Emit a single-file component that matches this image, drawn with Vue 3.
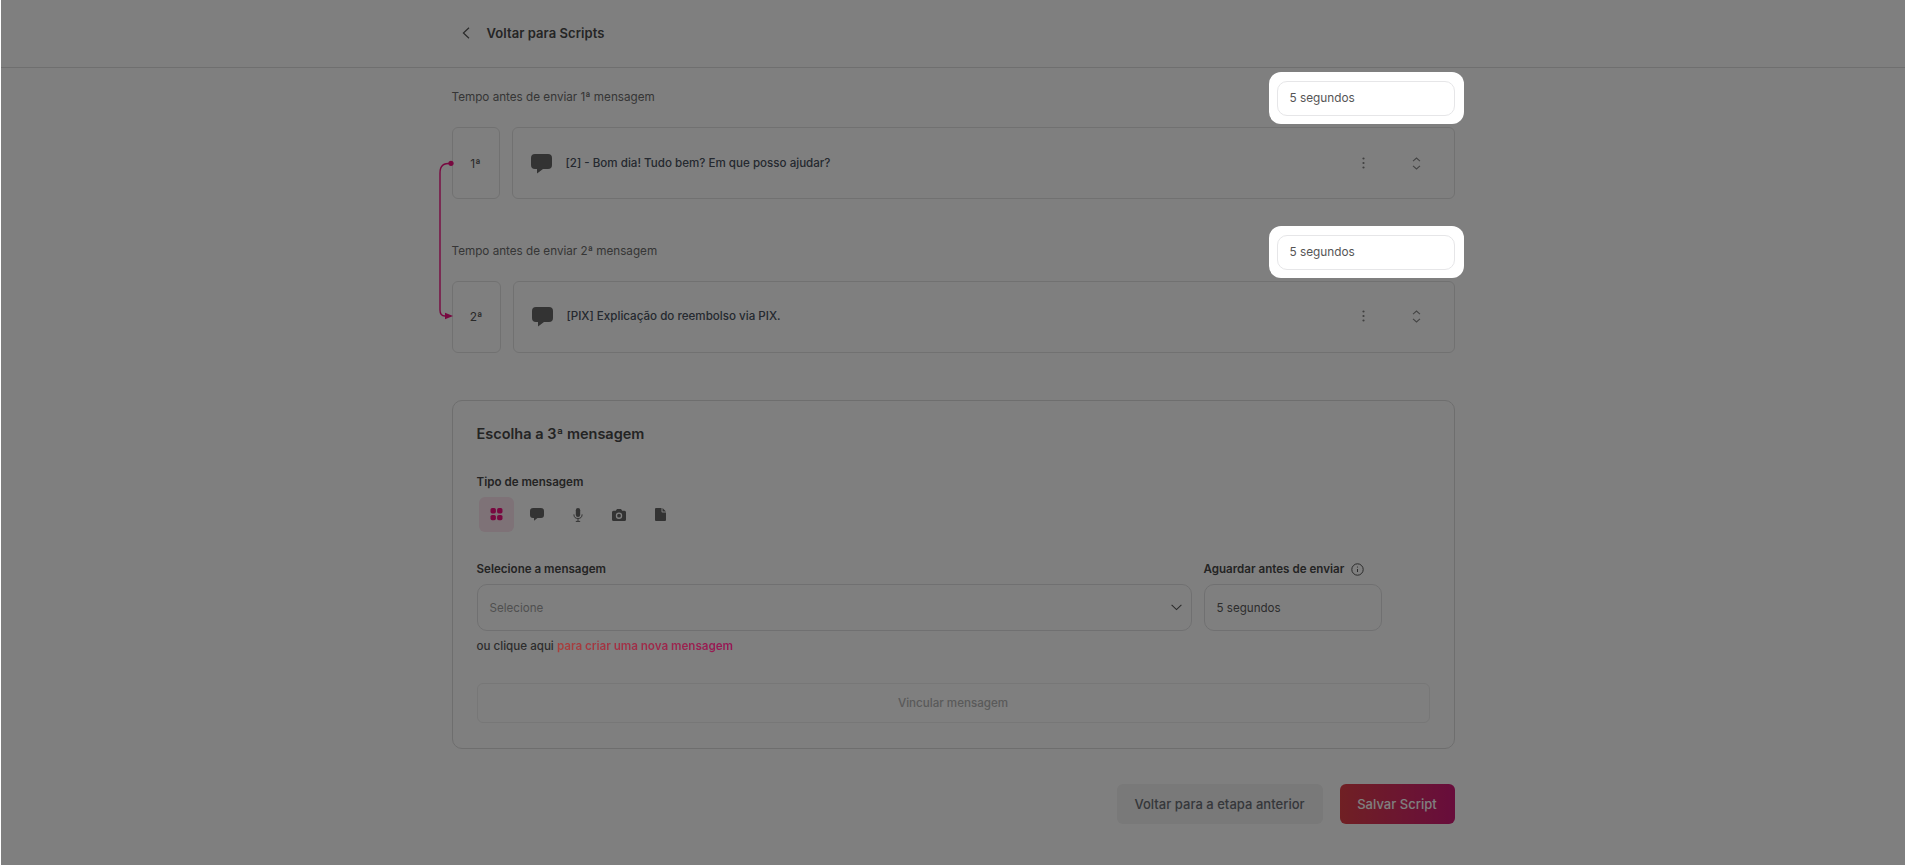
<script setup>
const steps = [
  { id: 1, label: 'Tempo antes de enviar 1ª mensagem', ord: '1ª', text: '[2] - Bom dia! Tudo bem? Em que posso ajudar?', wide: false },
  { id: 2, label: 'Tempo antes de enviar 2ª mensagem', ord: '2ª', text: '[PIX] Explicação do reembolso via PIX.', wide: true }
]
</script>

<template>
  <div class="page">
    <header class="top">
      <div class="top-in">
        <svg class="back" width="8" height="12" viewBox="0 0 8 12" fill="none"><path d="M7 .7 1.4 6 7 11.3" stroke="#555" stroke-width="1.2" /></svg>
        <span class="top-title">Voltar para Scripts</span>
      </div>
    </header>

    <main class="content">
      <svg class="link-line" width="30" height="170" viewBox="0 0 30 170" fill="none">
        <path d="M19 8.3C12 8.3 8 10 8 18V155Q8 161 13 161" stroke="#780840" stroke-width="1.4" />
        <circle cx="19" cy="8.300" r="2.600" fill="#780840" />
        <path d="M13 157.700 21 161 13 164.300Z" fill="#780840" />
      </svg>

      <section v-for="s in steps" :key="s.id" class="step" :class="{ 'step-two': s.wide }">
        <div class="step-head">
          <span class="step-label">{{ s.label }}</span>
          <div class="spot"><div class="spot-input">5 segundos</div></div>
        </div>
        <div class="step-row">
          <div class="ord" :class="{ 'ord-wide': s.wide }">{{ s.ord }}</div>
          <div class="msg">
            <svg class="bubble" width="21" height="20" viewBox="0 0 21 20"><path d="M4 0h13a4 4 0 0 1 4 4v7a4 4 0 0 1-4 4h-5l-6 4.500V15H4a4 4 0 0 1-4-4V4a4 4 0 0 1 4-4z" fill="#666" /></svg>
            <span class="msg-text">{{ s.text }}</span>
            <svg class="kebab" width="3" height="12" viewBox="0 0 3 12"><circle cx="1.500" cy="1.500" r="1.100" fill="#808080" /><circle cx="1.500" cy="6" r="1.100" fill="#808080" /><circle cx="1.500" cy="10.500" r="1.100" fill="#808080" /></svg>
            <svg class="updown" width="9" height="13" viewBox="0 0 9 13" fill="none"><path d="M1 4.200 4.500 1 8 4.200M1 8.800 4.500 12 8 8.800" stroke="#888" stroke-width="1.100" /></svg>
          </div>
        </div>
      </section>

      <section class="panel">
        <h2 class="panel-title">Escolha a 3ª mensagem</h2>
        <div class="field-label type-label">Tipo de mensagem</div>
        <div class="types">
          <div class="type type-on">
            <svg class="grid-ico" width="13" height="13" viewBox="0 0 13 13"><rect x="0.500" width="5.400" height="5.400" rx="1.700" /><rect x="7.100" width="5.400" height="5.400" rx="1.700" /><rect x="0.500" y="6.900" width="5.400" height="5.400" rx="1.700" /><rect x="7.100" y="6.900" width="5.400" height="5.400" rx="1.700" /></svg>
          </div>
          <div class="type"><svg width="14" height="13" viewBox="0 0 14 13"><path d="M3 0h8a3 3 0 0 1 3 3v4a3 3 0 0 1-3 3H7.500L4 12.700V10H3a3 3 0 0 1-3-3V3a3 3 0 0 1 3-3z" fill="#666" /></svg></div>
          <div class="type"><svg width="10" height="14" viewBox="0 0 10 14" fill="none"><rect x="2.800" y="0" width="4.400" height="9" rx="2.200" fill="#666" /><path d="M.9 6.400a4.100 4.100 0 0 0 8.200 0M5 10.600v2.600M2.800 13.400h4.400" stroke="#666" stroke-width="1" /></svg></div>
          <div class="type"><svg width="14" height="12" viewBox="0 0 14 12"><path fill-rule="evenodd" d="M5 0h4l1.200 1.700H12.500a1.500 1.500 0 0 1 1.500 1.500v7.300a1.500 1.500 0 0 1-1.500 1.500h-11A1.500 1.500 0 0 1 0 10.500V3.200a1.500 1.500 0 0 1 1.500-1.500h2.300zM7 3.500a3.200 3.200 0 1 0 0 6.400 3.200 3.200 0 0 0 0-6.400zm0 1.300a1.900 1.900 0 1 1 0 3.800 1.900 1.900 0 0 1 0-3.800z" fill="#666" /></svg></div>
          <div class="type"><svg width="11" height="13" viewBox="0 0 11 13"><path d="M1 0h5.500v3.500a1 1 0 0 0 1 1H11V12a1 1 0 0 1-1 1H1a1 1 0 0 1-1-1V1a1 1 0 0 1 1-1zM7.500 0 11 3.500H7.500z" fill="#666" /></svg></div>
        </div>

        <div class="fields">
          <div>
            <div class="field-label">Selecione a mensagem</div>
            <div class="box box-select">
              <span class="placeholder">Selecione</span>
              <svg width="11" height="7" viewBox="0 0 11 7" fill="none"><path d="M.6.8 5.500 5.600 10.400.8" stroke="#555" stroke-width="1.100" /></svg>
            </div>
            <p class="hint">ou clique aqui <span class="hint-link">para criar uma nova mensagem</span></p>
          </div>
          <div>
            <div class="field-label with-info">
              Aguardar antes de enviar
              <svg width="13" height="13" viewBox="0 0 13 13" fill="none"><circle cx="6.500" cy="6.500" r="5.700" stroke="#555" stroke-width="1" /><path d="M6.500 6v3" stroke="#555" /><circle cx="6.500" cy="4" r=".6" fill="#555" /></svg>
            </div>
            <div class="box box-value">5 segundos</div>
          </div>
        </div>

        <div class="link-btn">Vincular mensagem</div>
      </section>

      <footer class="actions">
        <div class="btn btn-back">Voltar para a etapa anterior</div>
        <div class="btn btn-save">Salvar Script</div>
      </footer>
    </main>

    <div class="overlay"></div>
  </div>
</template>

<style scoped>
.page {
  position: relative;
  min-height: 865px;
  height: 865px;
  overflow: hidden;
  background: #fff;
  border-left: 1px solid #fff;
  box-sizing: border-box;
  font-family: Inter, "Noto Sans", sans-serif;
  color: #4a5260;
}
.overlay {
  position: absolute;
  inset: 0;
  background: rgba(0, 0, 0, 0.5);
  z-index: 5;
}
.top {
  height: 68px;
  box-sizing: border-box;
  border-bottom: 1px solid #dedede;
}
.top-in {
  width: 1003px;
  height: 65px;
  margin: 0 auto;
  padding-left: 10px;
  box-sizing: border-box;
  display: flex;
  align-items: center;
  gap: 17px;
}
.top-title {
  font-size: 13px;
  font-weight: 600;
  letter-spacing: 0.07px;
  color: #4a4a4a;
}
.content {
  position: relative;
  width: 1003px;
  margin: 0 auto;
  padding-top: 4px;
}
.link-line {
  position: absolute;
  left: -20px;
  top: 87px;
  z-index: 6;
}
.step-two {
  margin-top: 27px;
}
.step-head {
  display: flex;
  justify-content: space-between;
  align-items: center;
  height: 52px;
}
.step-label {
  font-size: 11.7px;
  color: #6c6c6c;
  padding-bottom: 3px;
}
.spot {
  position: relative;
  z-index: 6;
  margin-right: -9px;
  padding: 8.5px 9px 8.5px 8px;
  background: #fff;
  border-radius: 12px;
}
.spot-input {
  width: 178px;
  height: 35px;
  box-sizing: border-box;
  border: 1px solid #e6e6e8;
  border-radius: 10px;
  padding: 0 12px;
  display: flex;
  align-items: center;
  font-size: 11.8px;
  color: #555;
}
.step-row {
  display: flex;
  gap: 12px;
  height: 72px;
  margin-top: 3px;
}
.ord,
.msg {
  border: 1px solid #e3e3e3;
  border-radius: 6px;
  box-sizing: border-box;
}
.ord {
  width: 48px;
  display: flex;
  align-items: center;
  justify-content: center;
  font-size: 12px;
  font-weight: 400;
  color: #555;
}
.ord-wide {
  width: 49px;
}
.msg {
  flex: 1;
  display: flex;
  align-items: center;
  padding-left: 18px;
}
.step-two .msg,
.step-two .ord {
  padding-bottom: 2px;
}
.bubble {
  margin: 2px 14px 0 0;
  flex: none;
}
.msg-text {
  font-size: 11.6px;
  font-weight: 500;
  color: #4a5260;
  flex: 1;
}
.kebab {
  margin-right: 47px;
}
.updown {
  margin-right: 33px;
}
.panel {
  margin-top: 47px;
  height: 349px;
  box-sizing: border-box;
  border: 1px solid #dcdcdc;
  border-radius: 10px;
  padding: 22px 24px 24px 24px;
}
.panel-title {
  margin: 0;
  font-size: 14.5px;
  line-height: 22px;
  font-weight: 600;
  color: #484848;
}
.field-label {
  font-size: 11.6px;
  line-height: 16px;
  font-weight: 600;
  color: #484848;
}
.type-label {
  margin-top: 29px;
}
.types {
  display: flex;
  gap: 6px;
  margin: 7px 0 0 2px;
}
.type {
  width: 35px;
  height: 35px;
  border-radius: 6px;
  display: flex;
  align-items: center;
  justify-content: center;
}
.type-on {
  background: #fde4ee;
  position: relative;
}
.grid-ico {
  position: relative;
  z-index: 6;
  fill: #780840;
}
.fields {
  display: grid;
  grid-template-columns: 715px 178px;
  gap: 12px;
  margin-top: 29px;
}
.with-info {
  display: flex;
  align-items: center;
  gap: 7px;
}
.box {
  height: 47px;
  margin-top: 7px;
  box-sizing: border-box;
  border: 1px solid #e0e0e2;
  border-radius: 10px;
  display: flex;
  align-items: center;
  padding: 0 12px;
  font-size: 11.6px;
}
.box-select {
  justify-content: space-between;
  padding-right: 9px;
}
.placeholder {
  color: #a0a0a0;
}
.box-value {
  color: #5a5a5a;
}
.hint {
  margin: 7px 0 0;
  font-size: 11.6px;
  line-height: 16px;
  font-weight: 500;
  color: #5a5a5a;
}
.hint-link {
  position: relative;
  z-index: 6;
  font-weight: 600;
  background: linear-gradient(90deg, #a8403c, #961656);
  -webkit-background-clip: text;
  background-clip: text;
  color: transparent;
}
.link-btn {
  margin-top: 29px;
  height: 40px;
  border: 1px solid #eeeeee;
  border-radius: 6px;
  box-sizing: border-box;
  display: flex;
  align-items: center;
  justify-content: center;
  font-size: 11.6px;
  font-weight: 500;
  color: #b4b4b4;
}
.actions {
  display: flex;
  justify-content: flex-end;
  gap: 17px;
  margin-top: 35px;
}
.btn {
  height: 40px;
  border-radius: 6px;
  display: flex;
  align-items: center;
  justify-content: center;
  font-size: 13px;
  font-weight: 500;
  letter-spacing: 0.03px;
}
.btn-back {
  width: 206px;
  background: #f2f2f2;
  color: #6b6f76;
}
.btn-save {
  width: 115px;
  background: linear-gradient(90deg, #e04048, #d01a78);
  color: #fff;
}
</style>
